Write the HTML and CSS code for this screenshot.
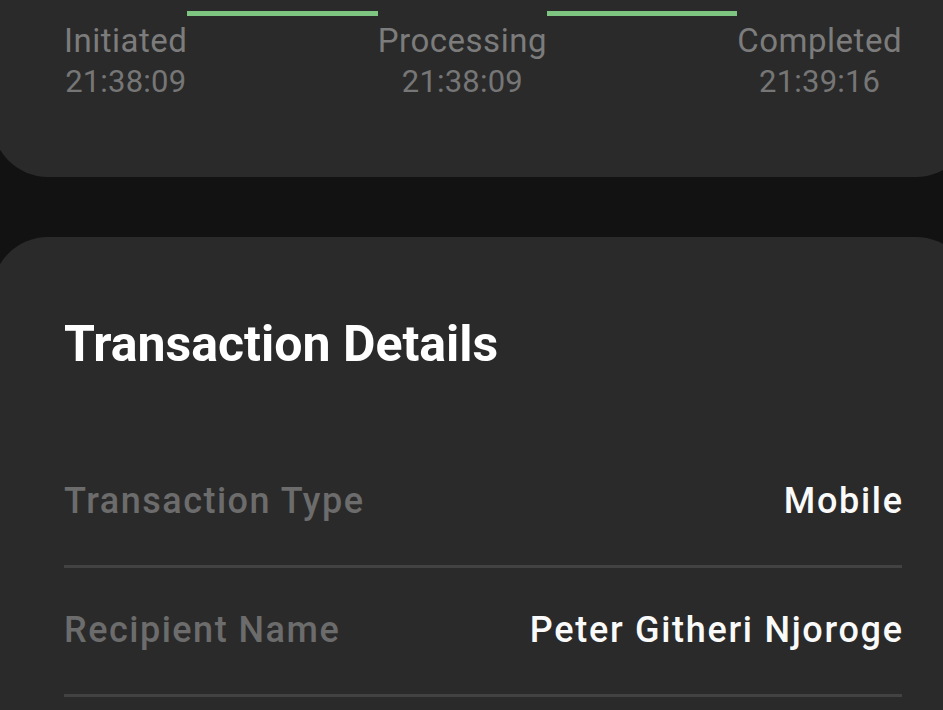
FILE: index.html
```html
<!DOCTYPE html>
<html lang="en">
<head>
<meta charset="utf-8">
<title>Transaction</title>
<link rel="stylesheet" href="styles.css">
</head>
<body>
<main class="page">
  <section class="card card-status">
    <div class="stepper">
      <div class="step">
        <span class="step-label">Initiated</span>
        <span class="step-time">21:38:09</span>
      </div>
      <div class="connector"></div>
      <div class="step">
        <span class="step-label">Processing</span>
        <span class="step-time">21:38:09</span>
      </div>
      <div class="connector"></div>
      <div class="step">
        <span class="step-label">Completed</span>
        <span class="step-time">21:39:16</span>
      </div>
    </div>
  </section>

  <section class="card card-details">
    <h2 class="details-title">Transaction Details</h2>
    <div class="detail-row">
      <span class="detail-label">Transaction Type</span>
      <span class="detail-value">Mobile</span>
    </div>
    <div class="detail-row">
      <span class="detail-label">Recipient Name</span>
      <span class="detail-value">Peter Githeri Njoroge</span>
    </div>
  </section>
</main>
</body>
</html>
```

FILE: styles.css
```css
html, body {
  margin: 0;
  padding: 0;
  background: #121212;
  overflow: hidden;
  height: 100%;
}

body {
  font-family: Roboto, "Liberation Sans", sans-serif;
}

.page {
  display: flex;
  flex-direction: column;
  gap: 60px;
  margin-left: -8px;
  width: 980px;
}

.card {
  background: #2a2a2a;
  box-sizing: border-box;
  padding-left: 72px;
  padding-right: 70px;
}

.card-status {
  border-radius: 0 0 56px 56px;
  padding-bottom: 76px;
}

.stepper {
  display: flex;
  align-items: flex-start;
}

.step {
  display: flex;
  flex-direction: column;
  align-items: center;
  padding-top: 21px;
}

.step-label {
  font-size: 33px;
  line-height: 40px;
  color: #7c7c7c;
  letter-spacing: 0.5px;
  margin-bottom: 2px;
}

.step-time {
  font-size: 31px;
  line-height: 38px;
  color: #767676;
  letter-spacing: 0.2px;
}

.connector {
  flex: 1;
  height: 5px;
  margin-top: 11px;
  background: #7dc581;
}

.card-details {
  border-radius: 56px 56px 0 0;
  padding-top: 77px;
  min-height: 600px;
}

.details-title {
  margin: 0 0 65px;
  font-size: 50px;
  line-height: 60px;
  font-weight: 700;
  color: #ffffff;
}

.detail-row {
  display: flex;
  justify-content: space-between;
  align-items: baseline;
  padding: 40px 0 42px;
  border-bottom: 3px solid #424242;
}

.detail-label {
  font-size: 36px;
  line-height: 44px;
  font-weight: 500;
  letter-spacing: 1.5px;
  color: #6c6c6c;
}

.detail-value {
  font-size: 36px;
  line-height: 44px;
  font-weight: 500;
  letter-spacing: 1.7px;
  margin-right: -1.7px;
  color: #fafafa;
}
```
